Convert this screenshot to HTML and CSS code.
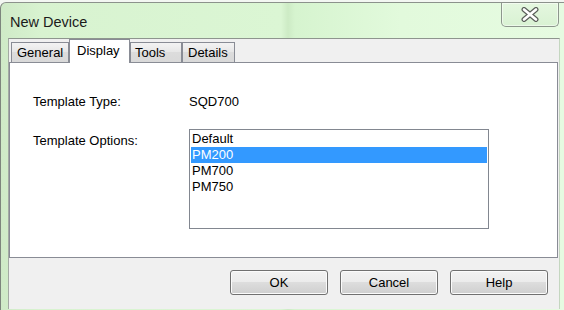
FILE: index.html
```html
<!DOCTYPE html>
<html lang="en">
<head>
    <meta charset="UTF-8">
    <meta name="viewport" content="width=device-width, initial-scale=1.0">
    <title>New Device</title>
    <link rel="stylesheet" href="styles.css">
</head>
<body>
    <div class="window">
        <div class="caption">
            <span class="title">New Device</span>
            <button class="close-btn" title="Close">
                <svg width="18" height="15" viewBox="0 0 18 15">
                    <path d="M3 2.5L15 12.5M15 2.5L3 12.5" stroke="#5a5f5a" stroke-width="5" stroke-linecap="round"/>
                    <path d="M3 2.5L15 12.5M15 2.5L3 12.5" stroke="#ffffff" stroke-width="2.6" stroke-linecap="round"/>
                </svg>
            </button>
        </div>

        <div class="client">
            <div class="tabs">
                <div class="tab tab-general">General</div>
                <div class="tab tab-display selected">Display</div>
                <div class="tab tab-tools">Tools</div>
                <div class="tab tab-details">Details</div>
            </div>

            <div class="panel">
                <div class="form-row">
                    <span class="field-label">Template Type:</span>
                    <span class="field-value">SQD700</span>
                </div>
                <div class="form-row">
                    <label class="field-label options-label" for="templateOptions">Template Options:</label>
                    <div class="listbox" id="templateOptions">
                        <div class="list-item">Default</div>
                        <div class="list-item selected">PM200</div>
                        <div class="list-item">PM700</div>
                        <div class="list-item">PM750</div>
                    </div>
                </div>
            </div>

            <div class="button-row">
                <button class="dlg-btn">OK</button>
                <button class="dlg-btn">Cancel</button>
                <button class="dlg-btn">Help</button>
            </div>
        </div>
    </div>
</body>
</html>
```

FILE: styles.css
```css
/* Windows 7 style dialog */
body {
    margin: 0;
    padding: 0;
    background-color: #f3f7f2;
    font-family: "Liberation Sans", Arial, sans-serif;
    font-size: 13px;
    color: #000;
}

.window {
    box-sizing: border-box;
    height: 308px;
    margin-top: 2px;
    display: flex;
    flex-direction: column;
    border-left: 1px solid #7d857d;
    border-top: 1px solid #8c928c;
    border-top-left-radius: 6px;
    background: linear-gradient(90deg, #cfeac7 0, #d8f3d0 40px, #dbf6d4 280px, #cdebc5 287px, #d6f4cf 294px, #e2fadc 400px, #e6fbe1 100%);
}

.caption {
    height: 35px;
    display: flex;
    justify-content: space-between;
    align-items: flex-start;
}

.title {
    font-size: 14.5px;
    line-height: 18px;
    padding-top: 10px;
    padding-left: 9px;
    color: #1b1b1b;
}

.close-btn {
    box-sizing: border-box;
    width: 58px;
    height: 24px;
    margin-right: 5px;
    padding: 0;
    border: 1px solid #8d978d;
    border-top: none;
    border-radius: 0 0 5px 5px;
    background: linear-gradient(#e4f7df, #d9f2d3);
    display: flex;
    justify-content: center;
    align-items: center;
    box-shadow: inset 0 0 0 1px rgba(255, 255, 255, 0.5);
}

.client {
    box-sizing: border-box;
    flex: 1;
    width: 552px;
    margin: 0 4px 1px 7px;
    background-color: #f0f0f0;
    border-top: 1px solid #8e958e;
    border-left: 1px solid #a3aaa3;
    border-right: 1px solid #c4d6c0;
}

.tabs {
    display: flex;
    align-items: flex-end;
    height: 23px;
    padding-left: 2px;
}

.tab {
    box-sizing: border-box;
    height: 20px;
    line-height: 19px;
    border: 1px solid #898c95;
    border-bottom: none;
    background: linear-gradient(#f3f3f3, #e6e6e6 50%, #dcdcdc 50%, #d9d9d9);
    white-space: nowrap;
}

.tab.selected {
    position: relative;
    z-index: 1;
    height: 24px;
    line-height: 21px;
    margin-bottom: -1px;
    background: #fff;
}

.tab-general { width: 58px; padding-left: 5px; }
.tab-display { width: 61px; padding-left: 7px; }
.tab-tools { width: 52px; padding-left: 4px; }
.tab-details { width: 53px; padding-left: 5px; }

.panel {
    box-sizing: border-box;
    width: 549px;
    height: 196px;
    padding: 31px 0 0 23px;
    background: #fff;
    border: 1px solid #898c95;
}

.form-row {
    display: grid;
    grid-template-columns: 156px 300px;
    line-height: 16px;
    margin-bottom: 19px;
}

.options-label {
    margin-top: 4px;
}

.listbox {
    box-sizing: border-box;
    height: 100px;
    padding: 1px;
    border: 1px solid #828790;
    background: #fff;
}

.list-item {
    line-height: 16px;
    padding-left: 1px;
}

.list-item.selected {
    background-color: #3399ff;
    color: #fff;
}

.button-row {
    display: flex;
    justify-content: flex-end;
    gap: 12px;
    margin-top: 12px;
    padding-right: 11px;
}

.dlg-btn {
    box-sizing: border-box;
    width: 98px;
    height: 25px;
    padding: 0;
    font-family: "Liberation Sans", Arial, sans-serif;
    font-size: 13px;
    color: #000;
    border: 1px solid #707070;
    border-radius: 3px;
    background: linear-gradient(#f2f2f2, #ebebeb 50%, #dddddd 50%, #cfcfcf);
    box-shadow: inset 0 0 0 1px #fbfbfb;
}
```
